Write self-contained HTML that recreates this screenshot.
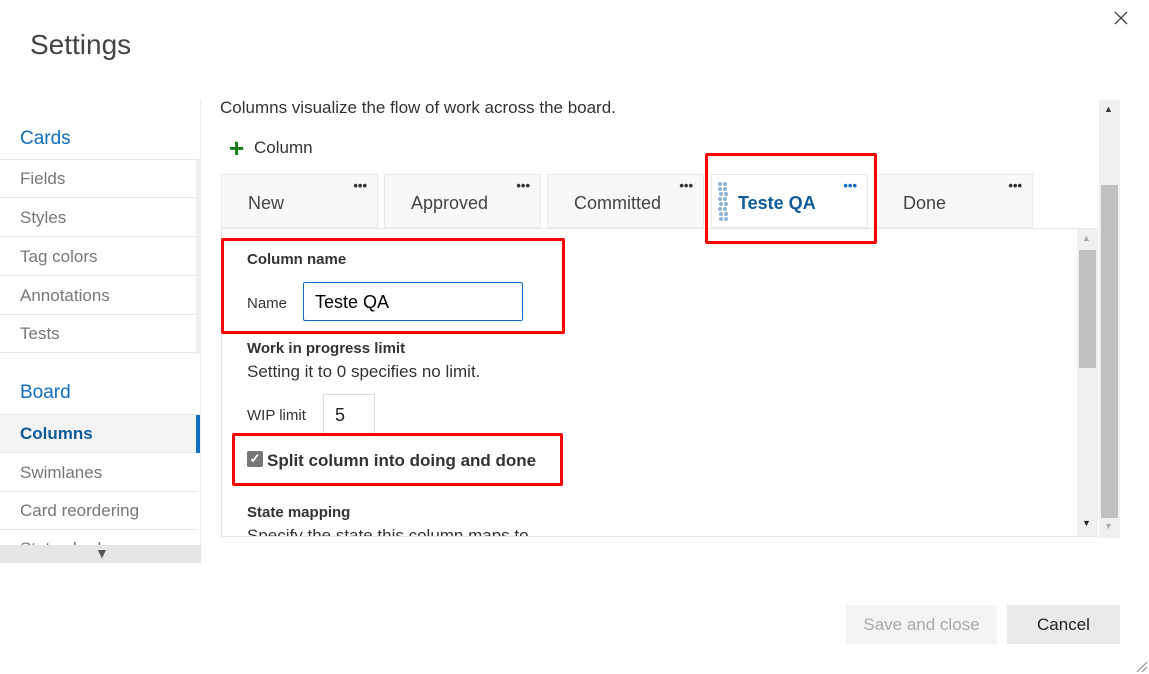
<!DOCTYPE html>
<html><head><style>
body{margin:0;width:1149px;height:674px;background:#fff;font-family:"Segoe UI","Liberation Sans",sans-serif;color:#333;position:relative;overflow:hidden}
.a{position:absolute}
.item{position:absolute;left:0;width:196px;height:38px;border-bottom:1px solid #e8e8e8;font-size:17px;color:#777;line-height:38px;padding-left:20px;box-sizing:border-box}
.tab{position:absolute;top:174px;height:54px;width:157px;background:#f8f8f8;border:1px solid #eaeaea;box-sizing:border-box;font-size:18px;color:#444;line-height:56px;padding-left:26px}
.dots{position:absolute;right:10px;top:-17px;font-size:13px;letter-spacing:0px;font-weight:bold;color:#333}
.red{position:absolute;border:3px solid #f00;border-radius:2px;box-sizing:border-box}
.b{font-weight:bold;font-size:15px;color:#333}
</style></head><body>
<div class="a" style="left:30px;top:29px;font-size:28px;color:#444">Settings</div>
<svg class="a" style="left:1114px;top:11px" width="14" height="14"><path d="M1 1L13 13M13 1L1 13" stroke="#444" stroke-width="1.3"/></svg>

<div class="a" style="left:200px;top:100px;width:1px;height:463px;background:#eee"></div>
<div class="a" style="left:20px;top:128px;font-size:19px;color:#106ebe">Cards</div>
<div class="a" style="left:0;top:159px;width:196px;height:1px;background:#e8e8e8"></div>
<div class="a" style="left:196px;top:159px;width:4px;height:195px;background:#eee"></div>
<div class="item" style="top:160px">Fields</div>
<div class="item" style="top:199px">Styles</div>
<div class="item" style="top:238px">Tag colors</div>
<div class="item" style="top:277px">Annotations</div>
<div class="item" style="top:315px">Tests</div>
<div class="a" style="left:20px;top:382px;font-size:19px;color:#106ebe">Board</div>
<div class="a" style="left:0;top:414px;width:200px;height:1px;background:#e8e8e8"></div>
<div class="item" style="top:415px;background:#f4f4f4;color:#0f5a99;font-weight:bold;width:200px">Columns</div>
<div class="a" style="left:196px;top:415px;width:4px;height:38px;background:#106ebe"></div>
<div class="item" style="top:454px">Swimlanes</div>
<div class="item" style="top:492px">Card reordering</div>
<div class="item" style="top:531px;height:14px;overflow:hidden;line-height:36px;border:none">Status badge</div>
<div class="a" style="left:0;top:545px;width:201px;height:18px;background:#e6e6e6"></div>
<div class="a" style="left:95px;top:545px;font-size:14px;color:#555">▼</div>

<div class="a" style="left:220px;top:98px;font-size:17px;color:#333">Columns visualize the flow of work across the board.</div>
<div class="a" style="left:229px;top:134px;font-size:26px;color:#107c10;font-weight:bold;line-height:28px">+</div>
<div class="a" style="left:254px;top:138px;font-size:17px;color:#333">Column</div>

<div class="tab" style="left:221px">New<span class="dots">•••</span></div>
<div class="tab" style="left:384px">Approved<span class="dots">•••</span></div>
<div class="tab" style="left:547px">Committed<span class="dots">•••</span></div>
<div class="tab" style="left:711px;background:#fff;color:#0f5a99;font-weight:bold;padding-left:26px">Teste QA<span class="dots" style="color:#106ebe">•••</span>
<svg class="a" style="left:5px;top:6px" width="14" height="42"><g fill="#8fb4d4"><circle cx="3" cy="3" r="2"/><circle cx="8" cy="3" r="2"/><circle cx="3" cy="8" r="2"/><circle cx="8" cy="8" r="2"/><circle cx="4" cy="13" r="2"/><circle cx="9" cy="13" r="2"/><circle cx="3" cy="18" r="2"/><circle cx="8" cy="18" r="2"/><circle cx="4" cy="23" r="2"/><circle cx="9" cy="23" r="2"/><circle cx="3" cy="28" r="2"/><circle cx="8" cy="28" r="2"/><circle cx="4" cy="33" r="2"/><circle cx="9" cy="33" r="2"/><circle cx="4" cy="38" r="2"/><circle cx="9" cy="38" r="2"/></g></svg></div>
<div class="tab" style="left:876px">Done<span class="dots">•••</span></div>

<div class="a" style="left:221px;top:228px;width:877px;height:309px;border:1px solid #e8e8e8;box-sizing:border-box"></div>
<div class="a" style="left:1077px;top:229px;width:21px;height:307px;background:#f0f0f0"></div>
<div class="a" style="left:1079px;top:250px;width:17px;height:118px;background:#c0c0c0"></div>
<div class="a" style="left:1082px;top:233px;font-size:9px;color:#aaa">▲</div>
<div class="a" style="left:1082px;top:518px;font-size:9px;color:#222">▼</div>

<div class="a" style="left:1099px;top:100px;width:21px;height:438px;background:#f0f0f0"></div>
<div class="a" style="left:1101px;top:185px;width:17px;height:333px;background:#c0c0c0"></div>
<div class="a" style="left:1104px;top:104px;font-size:9px;color:#333">▲</div>
<div class="a" style="left:1104px;top:521px;font-size:9px;color:#aaa">▼</div>

<div class="a b" style="left:247px;top:251px">Column name</div>
<div class="a" style="left:247px;top:295px;font-size:15px;color:#333">Name</div>
<div class="a" style="left:303px;top:282px;width:220px;height:39px;border:1px solid #106ebe;border-radius:2px;box-sizing:border-box;font-size:18px;color:#000;padding:8px 11px;line-height:22px">Teste QA</div>
<div class="a b" style="left:247px;top:340px">Work in progress limit</div>
<div class="a" style="left:247px;top:362px;font-size:17px">Setting it to 0 specifies no limit.</div>
<div class="a" style="left:247px;top:407px;font-size:15px">WIP limit</div>
<div class="a" style="left:323px;top:394px;width:52px;height:42px;border:1px solid #ddd;box-sizing:border-box;font-size:18px;padding:9px 11px;line-height:22px;color:#222">5</div>
<div class="a" style="left:247px;top:451px;width:16px;height:16px;background:#777;border-radius:2px;color:#fff;font-size:13px;line-height:16px;text-align:center;font-weight:bold">✓</div>
<div class="a" style="left:267px;top:451px;font-size:17px;font-weight:bold;color:#333">Split column into doing and done</div>
<div class="a b" style="left:247px;top:504px">State mapping</div>
<div class="a" style="left:247px;top:525px;height:11px;overflow:hidden;font-size:17px;line-height:22px">Specify the state this column maps to.</div>

<div class="red" style="left:705px;top:153px;width:172px;height:91px"></div>
<div class="red" style="left:221px;top:238px;width:344px;height:96px"></div>
<div class="red" style="left:232px;top:433px;width:331px;height:53px"></div>

<div class="a" style="left:846px;top:605px;width:151px;height:39px;background:#f4f4f4;color:#aaa;font-size:17px;text-align:center;line-height:39px">Save and close</div>
<div class="a" style="left:1007px;top:605px;width:113px;height:39px;background:#eaeaea;color:#222;font-size:17px;text-align:center;line-height:39px">Cancel</div>
<svg class="a" style="left:1136px;top:661px" width="12" height="12"><path d="M1 11L11 1M6 11L11 6" stroke="#888" stroke-width="1"/></svg>
</body></html>
